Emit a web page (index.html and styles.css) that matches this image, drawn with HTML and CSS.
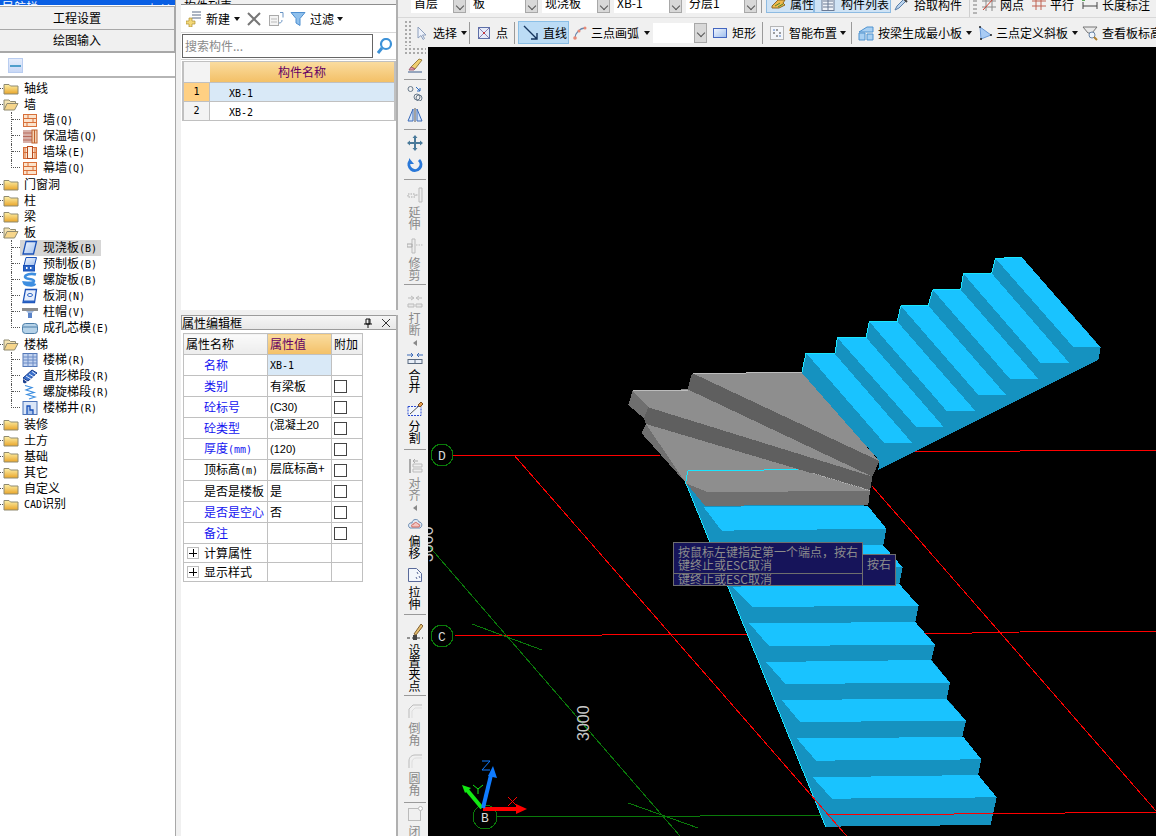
FILE: index.html
```html
<!DOCTYPE html>
<html lang="zh-CN">
<head>
<meta charset="utf-8">
<title>板 绘图输入</title>
<link rel="stylesheet" href="styles.css">
</head>
<body>
<svg class="defs" aria-hidden="true">
  <defs>
    <linearGradient id="gold" x1="0" y1="0" x2="0" y2="1"><stop offset="0" stop-color="#fdf0a8"/><stop offset="1" stop-color="#e9a52a"/></linearGradient>
    <linearGradient id="bluefill" x1="0" y1="0" x2="1" y2="1"><stop offset="0" stop-color="#f4f8ff"/><stop offset="1" stop-color="#9dbdec"/></linearGradient>
    <symbol id="fc" viewBox="0 0 16 16"><path d="M1 4.500h5l1.500 1.500h7.500v8h-14z" fill="url(#gold)" stroke="#8f8a70"/></symbol>
    <symbol id="fo" viewBox="0 0 16 16"><path d="M1 14V4h5l1.500 1.500h5V8" fill="#f3e2b0" stroke="#8f8a70"/><path d="M1 14l3-6.500h11l-3.500 6.500z" fill="#f6d58a" stroke="#8f8a70"/></symbol>
    <symbol id="i-brick" viewBox="0 0 16 16"><rect x="1.500" y="2.500" width="13" height="12" fill="#fbe3cc" stroke="#d8703a"/><path d="M1 6.500h14M1 10.500h14M6 2.500v4M11 6.500v4M5 10.500v4" stroke="#d8703a"/></symbol>
    <symbol id="i-insul" viewBox="0 0 16 16"><rect x="1" y="2" width="9" height="13" fill="#d8b0a8"/><path d="M1 5h9M1 8.500h9M1 12h9" stroke="#b86a5c"/><rect x="10" y="2" width="5" height="13" fill="#f3d3b5" stroke="#c0602c"/><path d="M12.500 2v13" stroke="#c0602c"/></symbol>
    <symbol id="i-pier" viewBox="0 0 16 16"><rect x="1.500" y="3.500" width="13" height="11" fill="#fbe3cc" stroke="#d8703a"/><rect x="5.500" y="2.500" width="5" height="12" fill="#fff3e4" stroke="#b84a20"/><path d="M1 8.500h4M11 8.500h4M3 3.500v11M13 3.500v11" stroke="#d8703a"/></symbol>
    <symbol id="i-slab" viewBox="0 0 16 16"><path d="M4 1.500h10.500l-3 12.500H1z" fill="url(#bluefill)" stroke="#1b52b8" stroke-width="1.300"/></symbol>
    <symbol id="i-pre" viewBox="0 0 16 16"><path d="M4 1.500h10.500l-2 8H2z" fill="url(#bluefill)" stroke="#1b52b8"/><rect x="1.500" y="9.500" width="11" height="5.500" fill="#2a63c4" stroke="#1b52b8"/><path d="M4 11h1.500v2H4zM8 11h1.500v2H8z" fill="#fff"/></symbol>
    <symbol id="i-spiral" viewBox="0 0 16 16"><path d="M14 2.500C9 1 3 2.500 3 5s9 1.500 9 4-6 2-10 1.500c1 3 10 4 11 1" fill="none" stroke="#3d8ee0" stroke-width="2.600"/></symbol>
    <symbol id="i-hole" viewBox="0 0 16 16"><path d="M3.500 1.500h11l-2 13H1z" fill="#e6eefc" stroke="#1b52b8" stroke-width="1.300"/><ellipse cx="8" cy="7" rx="2.500" ry="1.500" fill="#fff" stroke="#2a63c4"/><path d="M2 12.500h10v2H1z" fill="#2a63c4"/></symbol>
    <symbol id="i-cap" viewBox="0 0 16 16"><rect x="0" y="4" width="16" height="3" fill="#8c8c8c"/><path d="M4 7h8l-2 2H6z" fill="#9db7dc"/><rect x="6" y="9" width="4" height="5" fill="#5a84c8"/></symbol>
    <symbol id="i-core" viewBox="0 0 16 16"><rect x=".5" y="3.500" width="15" height="10" rx="3" fill="#b5d2e8" stroke="#4d7ea8"/><path d="M1 7h14" stroke="#4d7ea8"/></symbol>
    <symbol id="i-stair" viewBox="0 0 16 16"><rect x="1" y="1.500" width="14" height="13" fill="#c2d3f0" stroke="#5579b8"/><path d="M1 5h14M1 8h14M1 11h14M6 1.500v13M11 1.500v13" stroke="#6a8ac4"/></symbol>
    <symbol id="i-flight" viewBox="0 0 16 16"><path d="M1 10l9-8 5 3-9 8z" fill="#3b71cc" stroke="#1b3f8e"/><path d="M4 8l5 3M7 6l5 3M10 3.500l4 3" stroke="#dde8fa"/><path d="M1 11l4 3-2 1.500-2-1z" fill="#1b3f8e"/></symbol>
    <symbol id="i-wind" viewBox="0 0 16 16"><path d="M3 1.500l7 2-6 2.500 8 2.500-7 2 8 2.500-6 2" fill="none" stroke="#3d8ee0" stroke-width="1.200"/></symbol>
    <symbol id="i-well" viewBox="0 0 16 16"><rect x="1" y="1.500" width="14" height="13" fill="#dbe6f7" stroke="#4d74b8"/><path d="M5 14V6h3v4h3v4" fill="#a8c2ea" stroke="#1b52b8" stroke-width="1.300"/></symbol>
    <symbol id="i-cursor" viewBox="0 0 16 16"><path d="M5 2v11l3-2.500 2 4 1.500-1-2-3.500h3.500z" fill="#eef2fb" stroke="#8ea0bd"/></symbol>
    <symbol id="i-point" viewBox="0 0 16 16"><rect x="2.500" y="2.500" width="11" height="11" fill="#e6ebf8" stroke="#5d6fa8"/><path d="M3 3l10 10M13 3L3 13" stroke="#8a7fb0"/><circle cx="8" cy="8" r="1" fill="#d02020"/></symbol>
    <symbol id="i-line" viewBox="0 0 16 16"><path d="M1 1l13 13M14 8v6H8" fill="none" stroke="#17365f" stroke-width="1.400"/></symbol>
    <symbol id="i-arc" viewBox="0 0 16 16"><path d="M3 13C3 8 8 3 13 3" fill="none" stroke="#6a88ad" stroke-width="1.300"/><circle cx="3" cy="13" r="1.800" fill="#e88a78"/><circle cx="7" cy="6" r="1.500" fill="#e88a78"/><circle cx="13" cy="3" r="1.500" fill="#e88a78"/></symbol>
    <symbol id="i-rect" viewBox="0 0 16 16"><rect x="1.500" y="3.500" width="13" height="9" fill="url(#bluefill)" stroke="#4466c0"/></symbol>
    <symbol id="i-smart" viewBox="0 0 16 16"><rect x="1.500" y="1.500" width="13" height="13" fill="#f4f6fa" stroke="#777" stroke-dasharray="1 1"/><path d="M8 4v2M8 10v2M4 8h2M10 8h2" stroke="#444"/><circle cx="5" cy="5" r=".8" fill="#3d6ec0"/><circle cx="11" cy="11" r=".8" fill="#3d6ec0"/></symbol>
    <symbol id="i-beam" viewBox="0 0 16 16"><path d="M1 7L9 2h6v5H8zM1 8h6v7H1zM9 9h6v6H9z" fill="#a9d0f2" stroke="#4f93d0"/></symbol>
    <symbol id="i-tilt" viewBox="0 0 16 16"><path d="M3 2l11 8-10 4z" fill="#a9ccf5" stroke="#6a9ad8"/><circle cx="3" cy="2" r="1" fill="#222"/><circle cx="14" cy="10" r="1" fill="#222"/><circle cx="4" cy="14" r="1" fill="#222"/></symbol>
    <symbol id="i-elev" viewBox="0 0 16 16"><path d="M1 2h14l-5 6H6z" fill="#e8e8e8" stroke="#777"/><circle cx="10" cy="10" r="3" fill="#eef4fb" stroke="#6a86a8"/><path d="M12 12l3 3" stroke="#b08030" stroke-width="2"/></symbol>
    <symbol id="i-prop" viewBox="0 0 16 16"><path d="M1 10l6-6h7l-2 3 2 2-6 3H1z" fill="#f0b84c" stroke="#8a6a28"/><path d="M4 10l5-3M7 11l5-3" stroke="#4a8a30"/></symbol>
    <symbol id="i-list" viewBox="0 0 16 16"><rect x="2" y="1.500" width="12" height="13" fill="#eef2f8" stroke="#6a7a94"/><path d="M8 2v12M3 5h10M3 8h10M3 11h10" stroke="#6a7a94"/></symbol>
    <symbol id="i-pick" viewBox="0 0 16 16"><path d="M2 14l2-4 7-7 2 2-7 7z" fill="#bcd4ee" stroke="#5a7fa8"/><path d="M10 2l4 4" stroke="#444" stroke-width="2"/></symbol>
    <symbol id="i-grid" viewBox="0 0 16 16"><path d="M1 5h14M1 11h14M5 1v14M11 1v14" stroke="#8a8a8a"/><path d="M2 14L13 2" stroke="#d04030"/></symbol>
    <symbol id="i-para" viewBox="0 0 16 16"><path d="M1 5h14M1 10h14M5 2v12M10 2v12" stroke="#c06050"/></symbol>
    <symbol id="i-dim" viewBox="0 0 16 16"><path d="M1 6v7M15 6v7M1 10h14" stroke="#444"/><rect x="0" y="2" width="3" height="3" fill="#58a858"/></symbol>
    <symbol id="i-new" viewBox="0 0 16 16"><path d="M6 1h9M6 4h9M6 7h9" stroke="#5a6a86"/><path d="M3 7h3v3h3v3H6v3H3v-3H0v-3h3z" fill="#f3d878" stroke="#b09030" stroke-width=".7"/></symbol>
    <symbol id="i-x" viewBox="0 0 16 16"><path d="M2 2l12 12M14 2L2 14" stroke="#777" stroke-width="2"/></symbol>
    <symbol id="i-copy" viewBox="0 0 16 16"><rect x="1.500" y="4.500" width="9" height="10" fill="#f4f4f4" stroke="#aaa"/><path d="M3 8h6M3 11h6" stroke="#bbb"/><path d="M12 1.500h3v5M14 9c0 2-1 3-3 3" fill="none" stroke="#6a94c4"/></symbol>
    <symbol id="i-funnel" viewBox="0 0 16 16"><path d="M1 1.500h14l-5 6v7l-4-2.500V7.500z" fill="#8fc0ec" stroke="#4f8fd0"/></symbol>
    <symbol id="i-search" viewBox="0 0 16 16"><circle cx="9" cy="6" r="5" fill="#fff" stroke="#3d92d8" stroke-width="2.200"/><path d="M5 10l-4 5" stroke="#3d92d8" stroke-width="3"/></symbol>
    <symbol id="i-pin" viewBox="0 0 10 10"><path d="M3 1h4v5H3zM1 6h8M5 6v4M6 1v5" fill="none" stroke="#111"/></symbol>
    <symbol id="i-close" viewBox="0 0 10 10"><path d="M1 1l8 8M9 1L1 9" stroke="#333"/></symbol>
    <symbol id="i-brush" viewBox="0 0 16 16"><path d="M1 15h14" stroke="#3a5a8a"/><path d="M4 10l8-8 3 1-7 9z" fill="#f0cf70" stroke="#9a8040"/><path d="M4 10l-2 3h5l1-1z" fill="#e89aa8" stroke="#a06070"/></symbol>
    <symbol id="i-circles" viewBox="0 0 16 16"><circle cx="3.500" cy="4" r="2.500" fill="none" stroke="#6a7a8a"/><circle cx="10" cy="12" r="3" fill="none" stroke="#6a7a8a"/><circle cx="12" cy="13" r="3" fill="none" stroke="#6a7a8a"/><path d="M9 2l4 4M13 3v3h-3" fill="none" stroke="#2a6ac0"/></symbol>
    <symbol id="i-mirror" viewBox="0 0 16 16"><path d="M8 1v14" stroke="#555"/><path d="M6 2v12H1zM10 2v12h5z" fill="#d8e6f8" stroke="#3a6ab8"/></symbol>
    <symbol id="i-move" viewBox="0 0 16 16"><path d="M8 0l2.500 3H9v4h4V5.500L16 8l-3 2.500V9H9v4h1.500L8 16l-2.500-3H7V9H3v1.500L0 8l3-2.500V7h4V3H5.500z" fill="#4a7a9a"/></symbol>
    <symbol id="i-rot" viewBox="0 0 16 16"><path d="M3 4A6 6 0 1 0 12 3" fill="none" stroke="#2a78d8" stroke-width="3"/><path d="M2 1v6h5z" fill="#2a78d8"/></symbol>
    <symbol id="i-ext" viewBox="0 0 16 16"><path d="M12 1h3v14h-3z" fill="#eee" stroke="#bbb"/><path d="M1 7h7v3H1zM9 8h2" fill="none" stroke="#aaa" stroke-dasharray="1.500 1"/></symbol>
    <symbol id="i-trim" viewBox="0 0 16 16"><path d="M5 1h3v14H5z" fill="#eee" stroke="#bbb"/><path d="M0 6h5v3H0z" fill="none" stroke="#aaa"/><path d="M9 7h7" stroke="#bbb" stroke-dasharray="1.500 1"/></symbol>
    <symbol id="i-brk" viewBox="0 0 16 16"><path d="M1 11h6v3H1zM9 11h6v3H9z" fill="#e8e8e8" stroke="#bbb"/><path d="M1 5h5M4 3l3 2-3 2M15 5h-5M12 3L9 5l3 2" fill="none" stroke="#bbb"/></symbol>
    <symbol id="i-mrg" viewBox="0 0 16 16"><path d="M0 5h6M4 3l2 2-2 2M16 5h-6M12 3l-2 2 2 2" fill="none" stroke="#3a6ab8"/><rect x="1" y="9.500" width="14" height="4" fill="#e8eef8" stroke="#5a6a80"/><path d="M8 9v5" stroke="#5a6a80"/></symbol>
    <symbol id="i-spl" viewBox="0 0 16 16"><rect x="1" y="5.500" width="13" height="9" fill="#f2f6fc" stroke="#2a4ad0" stroke-dasharray="2 1"/><path d="M3 13L14 3" stroke="#555"/><path d="M11 4l3-3 2 2-3 3z" fill="#e8a050" stroke="#805020"/></symbol>
    <symbol id="i-aln" viewBox="0 0 16 16"><path d="M3 1v14" stroke="#aaa" stroke-width="2"/><path d="M6 6h9v3H6zM6 11h9v3H6z" fill="#eee" stroke="#bbb"/><path d="M11 3H6M8 1L6 3l2 2" fill="none" stroke="#aaa"/></symbol>
    <symbol id="i-off" viewBox="0 0 16 16"><path d="M3 12c-3-2-1-6 2-5 0-4 6-5 7-1 3 0 4 4 1 6z" fill="#dde6f2" stroke="#6a8ab0"/><path d="M5 11c-1-2 0-3 2-3 0-2 3-2 4 0 2 0 2 2 1 3z" fill="#f4c4c0" stroke="#d06a60"/></symbol>
    <symbol id="i-str" viewBox="0 0 16 16"><path d="M1.500 1.500h8l5 5v8h-13z" fill="#f2f6fc" stroke="#5a6a9a"/><path d="M10 5l1 2M12 9l1 2M9 10l1 2" stroke="#5a6a9a"/></symbol>
    <symbol id="i-grip" viewBox="0 0 16 20"><path d="M0 17h16" stroke="#333" stroke-dasharray="3 2"/><rect x="6" y="14" width="4" height="5" fill="#444"/><path d="M7 13l7-10 2 2-7 9z" fill="#e8c070" stroke="#806030"/></symbol>
    <symbol id="i-cham" viewBox="0 0 16 16"><path d="M2 15V6l4-4h9" fill="none" stroke="#bbb"/><path d="M5 15V8l3-3h7" fill="none" stroke="#ddd"/></symbol>
    <symbol id="i-fil" viewBox="0 0 16 16"><path d="M2 15V8c0-4 3-6 6-6h7" fill="none" stroke="#bbb"/><path d="M5 15V9c0-2 2-4 4-4h6" fill="none" stroke="#ddd"/></symbol>
    <symbol id="i-cls" viewBox="0 0 16 16"><rect x="1.500" y="2.500" width="12" height="12" fill="none" stroke="#bbb"/><circle cx="13.500" cy="2.500" r="2" fill="#fff" stroke="#bbb"/></symbol>
  </defs>
</svg>

<div class="app">
  <aside class="nav">
    <div class="clipbar blue"><span class="clip-text">导航栏</span><span class="clip-icons">⊥ ×</span></div>
    <div class="nav-btn first">工程设置</div>
    <div class="nav-btn">绘图输入</div>
    <div class="nav-tool"><span class="minus"></span></div>
    <div class="tree">
      <div class="r"><svg class="ic"><use href="#fc"/></svg><span>轴线</span></div>
      <div class="r"><svg class="ic"><use href="#fo"/></svg><span>墙</span></div>
      <div class="kids">
        <div class="k"><i class="stub"></i><span class="lab"><svg class="ic"><use href="#i-brick"/></svg><span>墙<span class="l">(Q)</span></span></span></div>
        <div class="k"><i class="stub"></i><span class="lab"><svg class="ic"><use href="#i-insul"/></svg><span>保温墙<span class="l">(Q)</span></span></span></div>
        <div class="k"><i class="stub"></i><span class="lab"><svg class="ic"><use href="#i-pier"/></svg><span>墙垛<span class="l">(E)</span></span></span></div>
        <div class="k"><i class="stub"></i><span class="lab"><svg class="ic"><use href="#i-brick"/></svg><span>幕墙<span class="l">(Q)</span></span></span></div>
      </div>
      <div class="r"><svg class="ic"><use href="#fc"/></svg><span>门窗洞</span></div>
      <div class="r"><svg class="ic"><use href="#fc"/></svg><span>柱</span></div>
      <div class="r"><svg class="ic"><use href="#fc"/></svg><span>梁</span></div>
      <div class="r"><svg class="ic"><use href="#fo"/></svg><span>板</span></div>
      <div class="kids">
        <div class="k"><i class="stub"></i><span class="lab sel"><svg class="ic"><use href="#i-slab"/></svg><span>现浇板<span class="l">(B)</span></span></span></div>
        <div class="k"><i class="stub"></i><span class="lab"><svg class="ic"><use href="#i-pre"/></svg><span>预制板<span class="l">(B)</span></span></span></div>
        <div class="k"><i class="stub"></i><span class="lab"><svg class="ic"><use href="#i-spiral"/></svg><span>螺旋板<span class="l">(B)</span></span></span></div>
        <div class="k"><i class="stub"></i><span class="lab"><svg class="ic"><use href="#i-hole"/></svg><span>板洞<span class="l">(N)</span></span></span></div>
        <div class="k"><i class="stub"></i><span class="lab"><svg class="ic"><use href="#i-cap"/></svg><span>柱帽<span class="l">(V)</span></span></span></div>
        <div class="k"><i class="stub"></i><span class="lab"><svg class="ic"><use href="#i-core"/></svg><span>成孔芯模<span class="l">(E)</span></span></span></div>
      </div>
      <div class="r"><svg class="ic"><use href="#fo"/></svg><span>楼梯</span></div>
      <div class="kids">
        <div class="k"><i class="stub"></i><span class="lab"><svg class="ic"><use href="#i-stair"/></svg><span>楼梯<span class="l">(R)</span></span></span></div>
        <div class="k"><i class="stub"></i><span class="lab"><svg class="ic"><use href="#i-flight"/></svg><span>直形梯段<span class="l">(R)</span></span></span></div>
        <div class="k"><i class="stub"></i><span class="lab"><svg class="ic"><use href="#i-wind"/></svg><span>螺旋梯段<span class="l">(R)</span></span></span></div>
        <div class="k"><i class="stub"></i><span class="lab"><svg class="ic"><use href="#i-well"/></svg><span>楼梯井<span class="l">(R)</span></span></span></div>
      </div>
      <div class="r"><svg class="ic"><use href="#fc"/></svg><span>装修</span></div>
      <div class="r"><svg class="ic"><use href="#fc"/></svg><span>土方</span></div>
      <div class="r"><svg class="ic"><use href="#fc"/></svg><span>基础</span></div>
      <div class="r"><svg class="ic"><use href="#fc"/></svg><span>其它</span></div>
      <div class="r"><svg class="ic"><use href="#fc"/></svg><span>自定义</span></div>
      <div class="r"><svg class="ic"><use href="#fc"/></svg><span><span class="l">CAD</span>识别</span></div>
    </div>
  </aside>

  <section class="mid">
    <div class="list-panel">
      <div class="clipbar grey"><span class="clip-text">构件列表</span></div>
      <div class="mid-tools">
        <svg class="ic"><use href="#i-new"/></svg><span class="ml4">新建</span><i class="arrow ml4"></i>
        <svg class="ic ml6"><use href="#i-x"/></svg>
        <svg class="ic ml6"><use href="#i-copy"/></svg>
        <svg class="ic ml6"><use href="#i-funnel"/></svg><span class="ml4">过滤</span><i class="arrow ml3"></i>
      </div>
      <div class="search">
        <div class="search-box">搜索构件...</div>
        <svg class="ic search-ic"><use href="#i-search"/></svg>
      </div>
      <div class="grid">
        <div class="g-corner"></div><div class="g-head">构件名称</div>
        <div class="g-num on">1</div><div class="g-cell on"><span class="l">XB-1</span></div>
        <div class="g-num">2</div><div class="g-cell"><span class="l">XB-2</span></div>
      </div>
    </div>
    <div class="prop-panel">
      <div class="prop-title"><span>属性编辑框</span><svg class="tiny"><use href="#i-pin"/></svg><svg class="tiny"><use href="#i-close"/></svg></div>
      <table class="props">
        <tr class="head"><th>属性名称</th><th class="val">属性值</th><th>附加</th></tr>
        <tr><td class="n blue">名称</td><td class="on"><span class="l">XB-1</span></td><td></td></tr>
        <tr><td class="n blue">类别</td><td>有梁板</td><td><i class="cb"></i></td></tr>
        <tr><td class="n blue">砼标号</td><td class="s">(C30)</td><td><i class="cb"></i></td></tr>
        <tr><td class="n blue">砼类型</td><td class="s up">(混凝土20</td><td><i class="cb"></i></td></tr>
        <tr><td class="n blue">厚度<span class="l">(mm)</span></td><td class="s">(120)</td><td><i class="cb"></i></td></tr>
        <tr><td class="n">顶标高<span class="l">(m)</span></td><td class="up">层底标高+</td><td><i class="cb"></i></td></tr>
        <tr><td class="n">是否是楼板</td><td>是</td><td><i class="cb"></i></td></tr>
        <tr><td class="n blue">是否是空心</td><td>否</td><td><i class="cb"></i></td></tr>
        <tr><td class="n blue">备注</td><td></td><td><i class="cb"></i></td></tr>
        <tr class="exp"><td><i class="plus"></i>计算属性</td><td></td><td></td></tr>
        <tr class="exp"><td><i class="plus"></i>显示样式</td><td></td><td></td></tr>
      </table>
    </div>
  </section>

  <main class="work">
    <div class="bar1">
      <div class="combo c43"><span>首层</span><i class="cbtn"></i></div>
      <div class="combo c55"><span>板</span><i class="cbtn"></i></div>
      <div class="combo c55"><span>现浇板</span><i class="cbtn"></i></div>
      <div class="combo c55"><span>XB-1</span><i class="cbtn"></i></div>
      <div class="combo c58"><span>分层1</span><i class="cbtn"></i></div>
      <i class="sep"></i>
      <div class="tb on1 b-prop"><svg class="ic"><use href="#i-prop"/></svg><span>属性</span></div>
      <div class="tb on1 b-list"><svg class="ic"><use href="#i-list"/></svg><span>构件列表</span></div>
      <div class="tb b-pick"><svg class="ic"><use href="#i-pick"/></svg><span>拾取构件</span></div>
      <i class="sep light"></i>
      <i class="grip"></i>
      <div class="tb b-grid"><svg class="ic"><use href="#i-grid"/></svg><span>网点</span></div>
      <div class="tb b-para"><svg class="ic"><use href="#i-para"/></svg><span>平行</span></div>
      <div class="tb b-dim"><svg class="ic"><use href="#i-dim"/></svg><span>长度标注</span></div>
    </div>
    <div class="bar2">
      <i class="grip wide"></i>
      <div class="tb"><svg class="ic"><use href="#i-cursor"/></svg><span>选择</span></div><i class="arrow ml4"></i><i class="sep ml2"></i>
      <div class="tb ml6"><svg class="ic"><use href="#i-point"/></svg><span>点</span></div><i class="sep ml6"></i>
      <div class="tb pressed ml3"><svg class="ic"><use href="#i-line"/></svg><span>直线</span></div>
      <div class="tb tight ml3"><svg class="ic"><use href="#i-arc"/></svg><span>三点画弧</span></div><i class="arrow ml5"></i>
      <div class="combo2 ml3"><span></span><i class="cbtn"></i></div>
      <div class="tb ml5"><svg class="ic"><use href="#i-rect"/></svg><span>矩形</span></div><i class="sep ml6"></i>
      <div class="tb ml6"><svg class="ic"><use href="#i-smart"/></svg><span>智能布置</span></div><i class="arrow ml3"></i><i class="sep ml5"></i>
      <div class="tb ml6"><svg class="ic"><use href="#i-beam"/></svg><span>按梁生成最小板</span></div><i class="arrow ml4"></i>
      <div class="tb tight2 ml5"><svg class="ic"><use href="#i-tilt"/></svg><span>三点定义斜板</span></div><i class="arrow ml4"></i>
      <div class="tb ml4 last"><svg class="ic"><use href="#i-elev"/></svg><span>查看板标高</span></div>
    </div>
    <div class="work-body">
      <div class="vbar">
        <i class="vgrip"></i>
        <div class="vslot"><svg class="ic"><use href="#i-brush"/></svg></div>
        <i class="vsep"></i>
        <div class="vslot"><svg class="ic"><use href="#i-circles"/></svg></div>
        <div class="vslot"><svg class="ic"><use href="#i-mirror"/></svg></div>
        <i class="vsep"></i>
        <div class="vslot"><svg class="ic"><use href="#i-move"/></svg></div>
        <div class="vslot"><svg class="ic"><use href="#i-rot"/></svg></div>
        <i class="vsep"></i>
        <div class="vt pt5 off"><svg class="ic"><use href="#i-ext"/></svg><span class="vtxt">延伸</span></div>
        <div class="vt pt8 off"><svg class="ic"><use href="#i-trim"/></svg><span class="vtxt">修剪</span></div>
        <i class="vsep"></i>
        <div class="vt pt6 off"><svg class="ic"><use href="#i-brk"/></svg><span class="vtxt">打断</span><i class="tri"></i></div>
        <div class="vt pt4"><svg class="ic"><use href="#i-mrg"/></svg><span class="vtxt">合并</span></div>
        <div class="vt pt8 pb2"><svg class="ic"><use href="#i-spl"/></svg><span class="vtxt">分割</span></div>
        <i class="vsep"></i>
        <div class="vt pt6 off"><svg class="ic"><use href="#i-aln"/></svg><span class="vtxt">对齐</span><i class="tri"></i></div>
        <div class="vt pt5"><svg class="ic"><use href="#i-off"/></svg><span class="vtxt">偏移</span></div>
        <div class="vt pt8 pb1"><svg class="ic"><use href="#i-str"/></svg><span class="vtxt">拉伸</span></div>
        <i class="vsep"></i>
        <div class="vt pt4"><svg class="ic tall"><use href="#i-grip"/></svg><span class="vtxt">设置夹点</span></div>
        <i class="vsep"></i>
        <div class="vt pt5 off"><svg class="ic"><use href="#i-cham"/></svg><span class="vtxt">倒角</span></div>
        <div class="vt pt7 pb3 off"><svg class="ic"><use href="#i-fil"/></svg><span class="vtxt">圆角</span></div>
        <i class="vsep"></i>
        <div class="vt pt1 off"><svg class="ic"><use href="#i-cls"/></svg><span class="vtxt">闭</span></div>
      </div>
      <div class="canvas">
        <svg class="scene" viewBox="428 47 728 789" width="728" height="789">
          <g class="thin" fill="none">
            <path d="M453 455.500H660M878 452L1020 451 1156 450M455 636L750 634M925 634L1020 632 1156 631" stroke="#ff0000"/>
            <path d="M872 486L1156 811" stroke="#ff0000"/>
            <path d="M428 545L680 836M472 624L542 650M628 803L698 828M497 817L700 816 827 815" stroke="#0a7a0a"/>
            <circle cx="442" cy="455" r="11" stroke="#0a7a0a"/>
            <circle cx="442" cy="636" r="11" stroke="#0a7a0a"/>
            <circle cx="485" cy="817" r="12" stroke="#0a7a0a"/>
          </g>
          <text class="axis" x="442" y="460">D</text>
          <text class="axis" x="442" y="641">C</text>
          <text class="axis" x="485" y="822">B</text>
          <text class="dim" transform="translate(589 741) rotate(-90)">3000</text>
          <text class="dim" transform="translate(433 562) rotate(-90)">3000</text>

          <g class="crisp" transform="translate(680 560) scale(.33333)">
            <polygon fill="#1592c0" points="17,-232 564,-162 619,-94 610,-44 668,22 658,72 716,137 706,186 765,254 754,300 810,368 800,416 858,482 847,530 904,598 894,645 950,712 932,795 437,800"/>
            <g fill="#19c3ff">
              <polygon points="70,-160 564,-162 619,-94 125,-88"/>
              <polygon points="112,-44 610,-44 668,22 170,26"/>
              <polygon points="155,80 658,72 716,137 218,141"/>
              <polygon points="208,190 706,186 765,254 267,258"/>
              <polygon points="258,306 752,300 810,368 316,372"/>
              <polygon points="305,420 798,416 858,482 360,486"/>
              <polygon points="350,535 850,531 904,598 408,602"/>
              <polygon points="398,652 895,645 950,712 456,716"/>
            </g>
            <path d="M17 -232L437 800" stroke="#19e6ff" stroke-width="3" fill="none"/>
          </g>

          <g class="crisp" transform="translate(780 240) scale(.33333)">
            <polygon fill="#1592c0" points="65,400 78,340 165,340 172,293 258,292 268,245 352,245 362,197 445,197 458,149 542,149 550,101 635,100 646,55 726,52 962,322 955,360 295,690 298,662"/>
            <g fill="#19c3ff">
              <polygon points="80,341 163,340 396,608 312,608"/>
              <polygon points="172,293 258,292 490,560 408,560"/>
              <polygon points="268,245 352,245 586,513 500,513"/>
              <polygon points="362,197 445,197 678,465 595,465"/>
              <polygon points="458,149 542,149 775,417 690,417"/>
              <polygon points="550,101 635,100 868,369 782,369"/>
              <polygon points="646,55 726,52 960,321 880,321"/>
            </g>
            <path d="M65 400L78 340H165L172 293H258L268 245H352L362 197H445L458 149H542L550 101H635L646 55L726 52" stroke="#19e6ff" stroke-width="3" fill="none"/>
          </g>

          <g class="crisp" transform="translate(620 360) scale(.33333)">
            <polygon fill="#5f5f5f" points="218,40 545,38 778,303 757,350 750,392 745,435 255,437 197,368 65,220 78,192 72,175 25,135 38,92 203,88"/>
            <polygon fill="#6f6f6f" points="38,92 25,135 72,175 85,142"/>
            <polygon fill="#6f6f6f" points="78,192 65,220 197,368 255,437 745,435 750,392"/>
            <polygon fill="#8e8e8e" points="218,40 545,38 778,303"/>
            <polygon fill="#5f5f5f" points="215,42 778,303 757,350 203,88"/>
            <polygon fill="#8e8e8e" points="38,92 203,88 757,350 85,142"/>
            <polygon fill="#5f5f5f" points="85,142 757,350 750,393 75,190"/>
            <polygon fill="#8e8e8e" points="78,192 752,392 265,397 197,368"/>
            <polygon fill="#8e8e8e" points="203,332 535,328 752,392 265,397 197,370"/>
            <path d="M197 370L203 332H330L535 328" stroke="#19e6ff" stroke-width="3" fill="none"/>
            <path d="M218 40L545 38M38 92H203" stroke="#bdbdbd" stroke-width="3" fill="none"/>
            <path d="M580 340L752 392" stroke="#cfcfcf" stroke-width="2" stroke-dasharray="4 3" fill="none"/>
          </g>

          <g class="thin" fill="none">
            <path d="M514 455L680 645 846.700 836" stroke="#ff0000"/>
            <path d="M827 815L1020 813.500 1156 812" stroke="#ff0000"/>
          </g>

          <g fill="none">
            <path d="M483 809L517 809" stroke="#ff0000" stroke-width="4"/>
            <path d="M516 804L527 809 516 814z" fill="#ff0000"/>
            <path d="M508 797l9 9M517 797l-9 9" stroke="#ff0000"/>
            <path d="M482 808L467 790" stroke="#12e812" stroke-width="4"/>
            <path d="M462 785L471 788 465 793z" fill="#12e812"/>
            <path d="M473 785l5 4 5-4M478 789v5" stroke="#12e812"/>
            <path d="M483 808L491 775" stroke="#0f7bff" stroke-width="4"/>
            <path d="M493 766L497 778 488 776z" fill="#0f7bff"/>
            <path d="M482 761h8l-8 9h8" stroke="#0f7bff"/>
          </g>
        </svg>
        <div class="tips">
          <div class="tip-main">
            <div class="tip-a">按鼠标左键指定第一个端点，按右<br>键终止或ESC取消</div>
            <div class="tip-b">键终止或ESC取消</div>
          </div>
          <div class="tip-side">按右</div>
        </div>
      </div>
    </div>
  </main>
</div>
</body>
</html>
```
FILE: styles.css
```css
* { box-sizing: border-box; }
html, body { margin: 0; padding: 0; height: 100%; overflow: hidden; }
body {
  width: 1156px;
  height: 836px;
  background: #f0f0f0;
  color: #000;
  font: 12px/16px "Noto Sans CJK SC", "Liberation Sans", sans-serif;
}
i { display: block; font-style: normal; }
.defs { position: absolute; width: 0; height: 0; }
.l { font-family: "DejaVu Sans Mono", "Liberation Mono", monospace; font-size: 10px; }
.ic { width: 16px; height: 16px; flex: none; display: block; }
.app { display: flex; width: 1156px; height: 836px; overflow: hidden; }

.ml2 { margin-left: 2px; }
.ml3 { margin-left: 3px; }
.ml4 { margin-left: 4px; }
.ml5 { margin-left: 5px; }
.ml6 { margin-left: 6px; }

/* clipped caption bars */
.clipbar { height: 5px; overflow: hidden; display: flex; align-items: flex-end; justify-content: space-between; flex: none; }
.clip-text { line-height: 12px; height: 12px; flex: none; margin-bottom: -8px; align-self: flex-end; }
.clipbar.blue { background: #0a5fe4; color: #fff; padding: 0 4px 0 2px; }
.clip-icons { line-height: 12px; height: 12px; margin-bottom: -8px; font-size: 11px; }
.clipbar.grey { background: #f0f0f0; border-bottom: 1px solid #8d8d8d; padding-left: 3px; }

/* left navigation */
.nav { width: 176px; flex: none; display: flex; flex-direction: column; background: #fff; border-right: 1px solid #a8a8a8; }
.nav-btn { height: 22px; line-height: 19px; text-align: center; padding-right: 20px; background: #f0f0f0; border-top: 1px solid #a8a8a8; border-right: 1px solid #a8a8a8; flex: none; }
.nav-btn.first { margin-top: 1px; height: 23px; line-height: 21px; }
.nav-tool { height: 27px; flex: none; background: #fff; border-top: 2px solid #a8a8a8; border-bottom: 2px solid #b5b5b5; padding: 5px 0 0 8px; }
.minus { width: 15px; height: 15px; background: linear-gradient(#e6edfb, #c9d8f6); border: 1px solid #b9cdf0; display: flex; align-items: center; justify-content: center; }
.minus::after { content: ""; display: block; width: 11px; height: 2px; background: #4f9ecb; }
.tree { flex: 1; padding-top: 2px; background: #fff; overflow: hidden; }
.r { height: 16px; display: flex; align-items: center; gap: 5px; padding-left: 3px; position: relative; white-space: nowrap; }
.r::before { content: ""; position: absolute; left: 0; top: 8px; width: 3px; border-top: 1px dotted #555; }
.kids { margin-left: 11px; }
.k { height: 16px; display: flex; align-items: center; border-left: 1px dotted #555; white-space: nowrap; }
.k:last-child { border-left: 0; padding-left: 0; }
.stub { width: 8px; height: 8px; flex: none; align-self: flex-start; border-bottom: 1px dotted #555; }
.k:last-child .stub { width: 9px; border-left: 1px dotted #555; }
.lab { display: flex; align-items: center; gap: 5px; height: 16px; padding: 0 4px 0 2px; }
.lab.sel { background: #d6d6d6; }

/* middle column */
.mid { width: 222px; flex: none; display: flex; flex-direction: column; padding-left: 5px; background: #f0f0f0; }
.list-panel { height: 310px; flex: none; background: #fff; border-right: 2px solid #b0b0b0; display: flex; flex-direction: column; }
.mid-tools { height: 28px; flex: none; display: flex; align-items: center; padding-left: 5px; border-bottom: 1px solid #d8d8d8; }
.arrow { width: 0; height: 0; flex: none; border: 3.500px solid transparent; border-top: 4px solid #111; border-bottom: 0; }
.search { height: 27px; flex: none; display: flex; align-items: center; padding: 0 0 0 1px; border-bottom: 1px solid #d0d0d0; }
.search-box { width: 191px; height: 24px; border: 1px solid #666; color: #8a8a8a; line-height: 21px; padding-left: 2px; font-size: 12px; }
.search-ic { margin-left: 4px; }
.grid { margin: 1px 0 0 1px; width: 214px; display: grid; grid-template-columns: 26px 1fr; border-top: 1px solid #c0c0c0; border-left: 2px solid #c0c0c0; border-right: 2px solid #c0c0c0; }
.g-corner { height: 21px; background: #f3f3f3; border-bottom: 1px solid #c0c0c0; }
.g-head { height: 21px; line-height: 20px; text-align: center; color: #640064; background: linear-gradient(#fadc9f, #f3c067); border-bottom: 1px solid #c0c0c0; }
.g-num { height: 19px; line-height: 17px; text-align: center; background: #f3f3f3; border-bottom: 1px solid #c0c0c0; border-right: 1px solid #c0c0c0; font-family: "DejaVu Sans Mono", monospace; font-size: 10px; }
.g-num.on { background: #ffd083; }
.g-cell { height: 19px; line-height: 17px; padding-left: 19px; border-bottom: 1px solid #c0c0c0; }
.g-cell.on { background: #d9e9f7; }

.prop-panel { margin-top: 5px; flex: 1; background: #fff; border-right: 2px solid #b0b0b0; display: flex; flex-direction: column; }
.prop-title { height: 15px; flex: none; display: flex; align-items: center; gap: 8px; background: linear-gradient(#f6f6f6, #e8e8e8); border: 1px solid #9c9c9c; border-right: 0; line-height: 14px; padding-right: 5px; }
.prop-title span { flex: 1; }
.tiny { width: 10px; height: 10px; flex: none; }
.props { margin: 3px 0 0 2px; width: 179px; table-layout: fixed; border-collapse: collapse; }
.props th, .props td { border: 1px solid #c0c0c0; height: 21px; padding: 0 0 0 2px; font-weight: 400; text-align: left; white-space: nowrap; overflow: hidden; line-height: 14px; }
.props th:nth-child(1) { width: 84px; }
.props th:nth-child(2) { width: 64px; }
.props th:nth-child(3) { width: 31px; }
.props .head th { background: linear-gradient(#fafafa, #ececec); height: 21px; }
.props .head th.val { background: linear-gradient(#fadc9f, #f3c067); color: #640064; }
.props td.n { padding-left: 20px; }
.props td.blue { color: #1414f0; }
.props td.on { background: #d9e9f7; }
.props td.s { font-family: "Liberation Sans", "Noto Sans CJK SC", sans-serif; font-size: 11px; }
.props td.up { vertical-align: top; line-height: 15px; }
.props .exp td { height: 19px; }
.cb { width: 13px; height: 13px; border: 1px solid #444; background: #fff; }
.plus { float: left; width: 12px; height: 12px; margin: 1px 5px 0 1px; border: 1px solid #bdbdbd; background: linear-gradient(#000, #000) center / 8px 1px no-repeat, linear-gradient(#000, #000) center / 1px 8px no-repeat; }

/* work area */
.work { flex: 1; min-width: 0; display: flex; flex-direction: column; overflow: hidden; }
.bar1 { height: 18px; flex: none; display: flex; align-items: flex-start; padding-left: 13px; border-bottom: 1px solid #d8d8d8; white-space: nowrap; }
.combo { height: 13px; flex: none; display: flex; background: #fff; margin-right: 4px; overflow: hidden; }
.combo span { flex: 1; padding-left: 3px; line-height: 12px; margin-top: -3px; height: 12px; }
.c43 { width: 55px; }
.c55 { width: 68px; }
.c58 { width: 71px; }
.cbtn { width: 13px; flex: none; background: #d8d8d8; border: 1px solid #a8a8a8; border-top: 0; position: relative; }
.cbtn::after { content: ""; position: absolute; left: 3px; top: 3px; width: 5px; height: 5px; border-right: 1px solid #555; border-bottom: 1px solid #555; transform: rotate(45deg); }
.sep { width: 1px; height: 100%; flex: none; background: #9a9a9a; }
.bar1 .sep { height: 13px; }
.bar1 .sep.light { background: #cfcfcf; margin-left: 3px; height: 17px; }
.tb { display: flex; align-items: center; gap: 4px; flex: none; white-space: nowrap; }
.bar1 .tb { height: 13px; overflow: hidden; padding-left: 5px; }
.bar1 .tb span { line-height: 12px; margin-top: -4px; }
.bar1 .tb .ic { margin-top: -5px; }
.on1 { background: #cfe3f5; border: 1px solid #8ebbe2; border-top: 0; }
.bar1 .b-prop { width: 48px; margin-left: 4px; gap: 3px; padding-left: 4px; }
.bar1 .b-list { width: 77px; gap: 5px; }
.bar1 .b-pick { width: 75px; gap: 5px; padding-left: 2px; }
.grip { width: 4px; height: 14px; flex: none; margin-left: 3px; background: repeating-linear-gradient(#b5b5b5 0 2px, transparent 2px 4px); }
.bar1 .b-grid { margin-left: 1px; gap: 3px; padding-left: 3px; }
.bar1 .b-para { margin-left: 2px; gap: 3px; padding-left: 5px; }
.bar1 .b-dim { margin-left: 3px; gap: 4px; }
.bar2 { height: 29px; flex: none; display: flex; align-items: center; padding-left: 6px; white-space: nowrap; }
.bar2 .sep { height: 22px; }
.grip.wide { width: 9px; margin: 0; height: 26px; background: radial-gradient(#aaa 1px, transparent 1px) 0 0 / 4px 4px; }
.pressed { width: 51px; height: 23px; background: #bcdcf5; border: 1px solid #8bbfe6; padding-left: 4px; }
.tight { gap: 3px; }
.tight2 { gap: 3px; }
.combo2 { width: 54px; height: 20px; flex: none; display: flex; background: #fff; }
.combo2 span { flex: 1; }
.combo2 .cbtn { border-top: 1px solid #a8a8a8; }
.combo2 .cbtn::after { top: 6px; }

.work-body { flex: 1; min-height: 0; display: flex; padding-left: 5px; }
.vbar { width: 25px; flex: none; display: flex; flex-direction: column; align-items: center; overflow: hidden; height: 789px; padding-right: 2px; }
.vgrip { width: 22px; height: 7px; flex: none; background: radial-gradient(#aaa 1px, transparent 1px) 0 0 / 4px 4px; }
.vslot { height: 22px; flex: none; display: flex; align-items: center; justify-content: center; }
.vsep { width: 22px; height: 6px; flex: none; background: linear-gradient(#9a9a9a, #9a9a9a) center / 100% 1px no-repeat; }
.vt { display: flex; flex-direction: column; align-items: center; gap: 3px; flex: none; }
.vtxt { display: block; width: 12px; line-height: 12px; word-break: break-all; white-space: normal; }
.vt.off .vtxt { color: #8a8a8a; }
.ic.tall { height: 20px; }
.tri { width: 0; height: 0; border: 3px solid transparent; border-right: 4px solid #888; border-left: 0; margin-top: 1px; }
.pt1 { padding-top: 1px; }
.pt4 { padding-top: 4px; }
.pt5 { padding-top: 5px; }
.pt6 { padding-top: 6px; }
.pt7 { padding-top: 7px; }
.pt8 { padding-top: 8px; }
.pb1 { padding-bottom: 1px; }
.pb2 { padding-bottom: 2px; }
.pb3 { padding-bottom: 3px; }

.canvas { flex: 1; min-width: 0; background: #000; position: relative; overflow: hidden; }
.scene { display: block; }
.crisp, .thin { shape-rendering: crispEdges; }
.axis { fill: #d8d8d8; font: 13px "Liberation Mono", monospace; text-anchor: middle; }
.dim { fill: #c8c8c8; font: 16px "Liberation Sans", sans-serif; }

.tips { position: absolute; left: 245px; top: 495px; display: flex; align-items: flex-end; color: #8c8c8c; line-height: 12.500px; }
.tip-main { width: 190px; height: 44px; background: #16145a; border: 1px solid #6e6e6e; display: flex; flex-direction: column; }
.tip-a { height: 30px; padding: 3px 0 0 4px; white-space: nowrap; }
.tip-b { flex: 1; border-top: 1px solid #6e6e6e; padding-left: 4px; overflow: hidden; line-height: 10px; }
.tip-side { width: 34px; height: 32px; margin-left: -1px; background: #16145a; border: 1px solid #6e6e6e; padding: 3px 0 0 4px; }
```
